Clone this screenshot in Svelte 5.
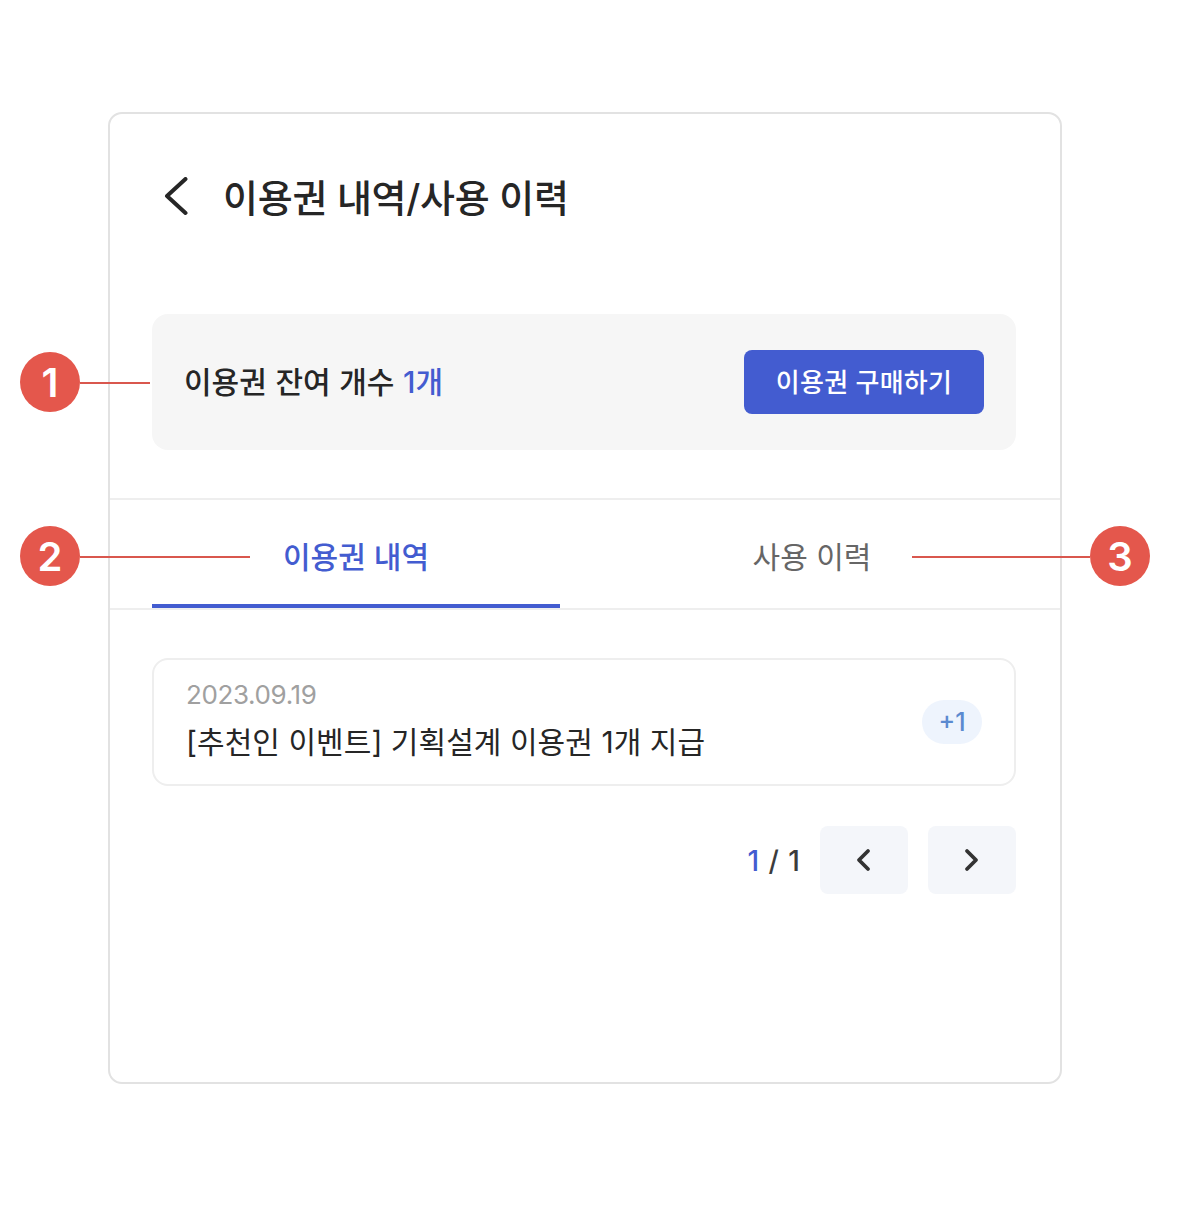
<script>
  const annotations = [
    { n: 1, cls: 'a1' },
    { n: 2, cls: 'a2' },
    { n: 3, cls: 'a3' }
  ];
</script>

<div class="page">
  <div class="card">
    <header class="head">
      <svg class="back" width="24" height="40" viewBox="0 0 24 40" fill="none" aria-hidden="true">
        <path d="M21.5 2 L3 19 L21.5 36" stroke="#262626" stroke-width="4" stroke-linecap="round" stroke-linejoin="round"/>
      </svg>
      <h1>이용권 내역/사용 이력</h1>
    </header>

    <section class="summary">
      <p>이용권 잔여 개수 <span class="blue">1개</span></p>
      <button class="buy">이용권 구매하기</button>
    </section>

    <nav class="tabs">
      <div class="tab active">이용권 내역</div>
      <div class="tab">사용 이력</div>
    </nav>

    <section class="list">
      <article class="item">
        <div class="info">
          <div class="date">2023.09.19</div>
          <div class="name">[추천인 이벤트] 기획설계 이용권 1개 지급</div>
        </div>
        <span class="badge">+1</span>
      </article>

      <div class="pager">
        <span class="count"><span class="blue">1</span> / 1</span>
        <button class="pg" aria-label="이전">
          <svg class="prev" width="16" height="24" viewBox="0 0 16 24" fill="none"><path d="M13 3 L4 12 L13 21" stroke="#333" stroke-width="3.8" stroke-linecap="round" stroke-linejoin="round"/></svg>
        </button>
        <button class="pg" aria-label="다음">
          <svg width="16" height="24" viewBox="0 0 16 24" fill="none"><path d="M3 3 L12 12 L3 21" stroke="#333" stroke-width="3.8" stroke-linecap="round" stroke-linejoin="round"/></svg>
        </button>
      </div>
    </section>
  </div>

  {#each annotations as a}
    <div class="line {a.cls}"></div>
    <div class="dot {a.cls}">{a.n}</div>
  {/each}
</div>

<style>
  :global(body) {
    margin: 0;
    background: #fff;
  }
  .page {
    position: relative;
    height: 1220px;
    padding: 112px 0 0 108px;
    box-sizing: border-box;
    font-family: Inter, "Noto Sans CJK KR", sans-serif;
    color: #262626;
  }
  .card {
    width: 954px;
    height: 972px;
    box-sizing: border-box;
    border: 2px solid #e2e2e2;
    border-radius: 14px;
    background: #fff;
  }
  .head {
    display: flex;
    align-items: center;
    gap: 35px;
    height: 40px;
    margin: 63px 0 0 54px;
  }
  .back {
    flex: none;
  }
  h1 {
    margin: 0;
    padding-top: 1px;
    font-size: 38px;
    line-height: 40px;
    font-weight: 500;
    letter-spacing: -0.27px;
    color: #262626;
  }
  .summary {
    display: flex;
    align-items: center;
    justify-content: space-between;
    height: 136px;
    box-sizing: border-box;
    margin: 97px 44px 0 42px;
    padding: 0 32px;
    border-radius: 16px;
    background: #f6f6f6;
  }
  .summary p {
    margin: 0;
    padding-bottom: 4px;
    font-size: 30px;
    font-weight: 500;
    letter-spacing: 0.02px;
    word-spacing: 0.5px;
    color: #262626;
  }
  .blue {
    color: #435cd0;
  }
  .buy {
    width: 240px;
    height: 64px;
    padding: 0 0 4px;
    border: 0;
    border-radius: 8px;
    background: #435cd0;
    color: #fff;
    font: 500 26px Inter, "Noto Sans CJK KR", sans-serif;
    letter-spacing: 0.25px;
  }
  .tabs {
    display: grid;
    grid-template-columns: 408px 408px;
    gap: 48px;
    margin-top: 48px;
    padding: 0 44px 0 42px;
    height: 108px;
    border-top: 2px solid #eeeeee;
    border-bottom: 2px solid #eeeeee;
  }
  .tab {
    display: flex;
    align-items: center;
    justify-content: center;
    height: 108px;
    box-sizing: border-box;
    padding-top: 2px;
    font-size: 30px;
    font-weight: 400;
    color: #666;
  }
  .tab.active {
    color: #435cd0;
    font-weight: 500;
    padding-top: 6px;
    border-bottom: 4px solid #435cd0;
  }
  .list {
    padding: 48px 44px 0 42px;
  }
  .item {
    display: flex;
    align-items: center;
    justify-content: space-between;
    height: 128px;
    box-sizing: border-box;
    padding: 0 32px;
    border: 2px solid #eeeeee;
    border-radius: 16px;
  }
  .info {
    padding-bottom: 4px;
  }
  .date {
    font-size: 26px;
    line-height: 36px;
    color: #a0a0a0;
    letter-spacing: -0.38px;
  }
  .name {
    margin-top: 7px;
    font-size: 30px;
    line-height: 44px;
    color: #262626;
    letter-spacing: 0.05px;
  }
  .badge {
    display: flex;
    align-items: center;
    justify-content: center;
    width: 60px;
    height: 44px;
    border-radius: 22px;
    background: #eef4fd;
    color: #5b8ad0;
    font-size: 25px;
    font-weight: 500;
  }
  .pager {
    display: flex;
    align-items: center;
    justify-content: flex-end;
    gap: 20px;
    margin-top: 40px;
  }
  .count {
    padding-top: 2px;
    font-size: 28px;
    font-weight: 500;
    color: #3c3c3c;
    word-spacing: 2px;
  }
  .pg {
    display: flex;
    align-items: center;
    justify-content: center;
    width: 88px;
    height: 68px;
    padding: 0;
    border: 0;
    border-radius: 8px;
    background: #f4f6fa;
  }
  .prev {
    margin-right: 2px;
  }
  .dot {
    position: absolute;
    width: 60px;
    height: 60px;
    border-radius: 50%;
    background: #e4574c;
    color: #fff;
    display: flex;
    align-items: center;
    justify-content: center;
    font-size: 40px;
    font-weight: 600;
  }
  .dot.a1 { left: 20px; top: 352px; }
  .dot.a2 { left: 20px; top: 526px; }
  .dot.a3 { left: 1090px; top: 526px; }
  .line {
    position: absolute;
    height: 2px;
    background: #d9574e;
  }
  .line.a1 { left: 80px; top: 382px; width: 70px; }
  .line.a2 { left: 80px; top: 556px; width: 170px; }
  .line.a3 { left: 912px; top: 556px; width: 178px; }
</style>
